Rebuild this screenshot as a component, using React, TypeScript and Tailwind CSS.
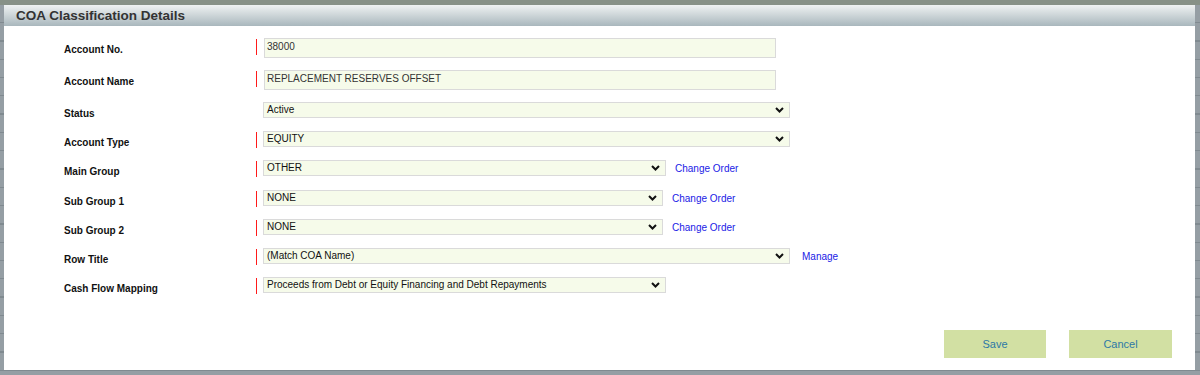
import React from "react";

type Row = {
  label: string;
  kind: "input" | "select";
  value: string;
  req: boolean;
  rowH: string;
  w: string;
  link?: string;
  linkCls?: string;
};

const rows: Row[] = [
  { label: "Account No.", kind: "input", value: "38000", req: true, rowH: "h-[32px]", w: "w-[512px]" },
  { label: "Account Name", kind: "input", value: "REPLACEMENT RESERVES OFFSET", req: true, rowH: "h-[32px]", w: "w-[512px]" },
  { label: "Status", kind: "select", value: "Active", req: false, rowH: "h-[29px]", w: "w-[527px]" },
  { label: "Account Type", kind: "select", value: "EQUITY", req: true, rowH: "h-[29px]", w: "w-[527px]" },
  { label: "Main Group", kind: "select", value: "OTHER", req: true, rowH: "h-[30px]", w: "w-[403px]", link: "Change Order", linkCls: "ml-[9px]" },
  { label: "Sub Group 1", kind: "select", value: "NONE", req: true, rowH: "h-[29px]", w: "w-[400px]", link: "Change Order", linkCls: "ml-[9px]" },
  { label: "Sub Group 2", kind: "select", value: "NONE", req: true, rowH: "h-[29px]", w: "w-[400px]", link: "Change Order", linkCls: "ml-[9px]" },
  { label: "Row Title", kind: "select", value: "(Match COA Name)", req: true, rowH: "h-[29px]", w: "w-[527px]", link: "Manage", linkCls: "ml-[12px]" },
  { label: "Cash Flow Mapping", kind: "select", value: "Proceeds from Debt or Equity Financing and Debt Repayments", req: true, rowH: "h-[29px]", w: "w-[403px]" },
];

function Chevron() {
  return (
    <svg width="9" height="6" viewBox="0 0 9 6" className="shrink-0">
      <polyline points="1,1 4.5,4.5 8,1" fill="none" stroke="#111" strokeWidth="2" />
    </svg>
  );
}

export default function App() {
  return (
    <div className="w-[1200px] h-[375px] overflow-hidden border-t-[5px] border-[#879187] bg-[repeating-linear-gradient(to_bottom,#959ea4_0px,#959ea4_17px,#808a90_17px,#808a90_18.3px)] pl-[4px] pr-[5px] pb-[5px] font-['Liberation_Sans',Arial,sans-serif] text-[10px]">
      <div className="flex h-full flex-col bg-white">
        <div className="h-[21px] shrink-0 bg-[linear-gradient(to_bottom,#eff2f2,#a9b7bd)] pl-[12px] pt-[3px] text-[13.5px] font-bold leading-[16px] text-[#333]">
          COA Classification Details
        </div>
        <div className="flex flex-1 flex-col pt-[12px]">
          {rows.map((r) => (
            <div key={r.label} className={`flex items-start pl-[60px] ${r.rowH}`}>
              <div className="w-[192px] pt-[6px] font-bold leading-[12px] text-[#111]">{r.label}</div>
              <div className="w-[7px] pt-[1px]">
                {r.req && <div className="h-[16px] w-[1px] bg-[#ff1a1a]" />}
              </div>
              {r.kind === "input" ? (
                <div className={`ml-[1px] h-[20px] border border-[#dadada] bg-[#f6fbea] pl-[2px] pt-[2px] leading-[12px] text-[#333] ${r.w}`}>
                  {r.value}
                </div>
              ) : (
                <div className={`flex h-[16px] items-center justify-between border border-[#dadada] bg-[#f6fbea] pl-[3px] pr-[5px] leading-[12px] text-[#111] ${r.w}`}>
                  <span className="pb-[1px]">{r.value}</span>
                  <Chevron />
                </div>
              )}
              {r.link && (
                <span className={`mt-[3px] leading-[12px] text-[#1a1ae6] ${r.linkCls}`}>{r.link}</span>
              )}
            </div>
          ))}
          <div className="mt-[24px] flex justify-end gap-[23px] pr-[23px]">
            <button className="h-[28px] w-[102px] bg-[#d2e0a3] text-[11px] text-[#2d78a6]">Save</button>
            <button className="h-[28px] w-[103px] bg-[#d2e0a3] text-[11px] text-[#2d78a6]">Cancel</button>
          </div>
        </div>
      </div>
    </div>
  );
}
